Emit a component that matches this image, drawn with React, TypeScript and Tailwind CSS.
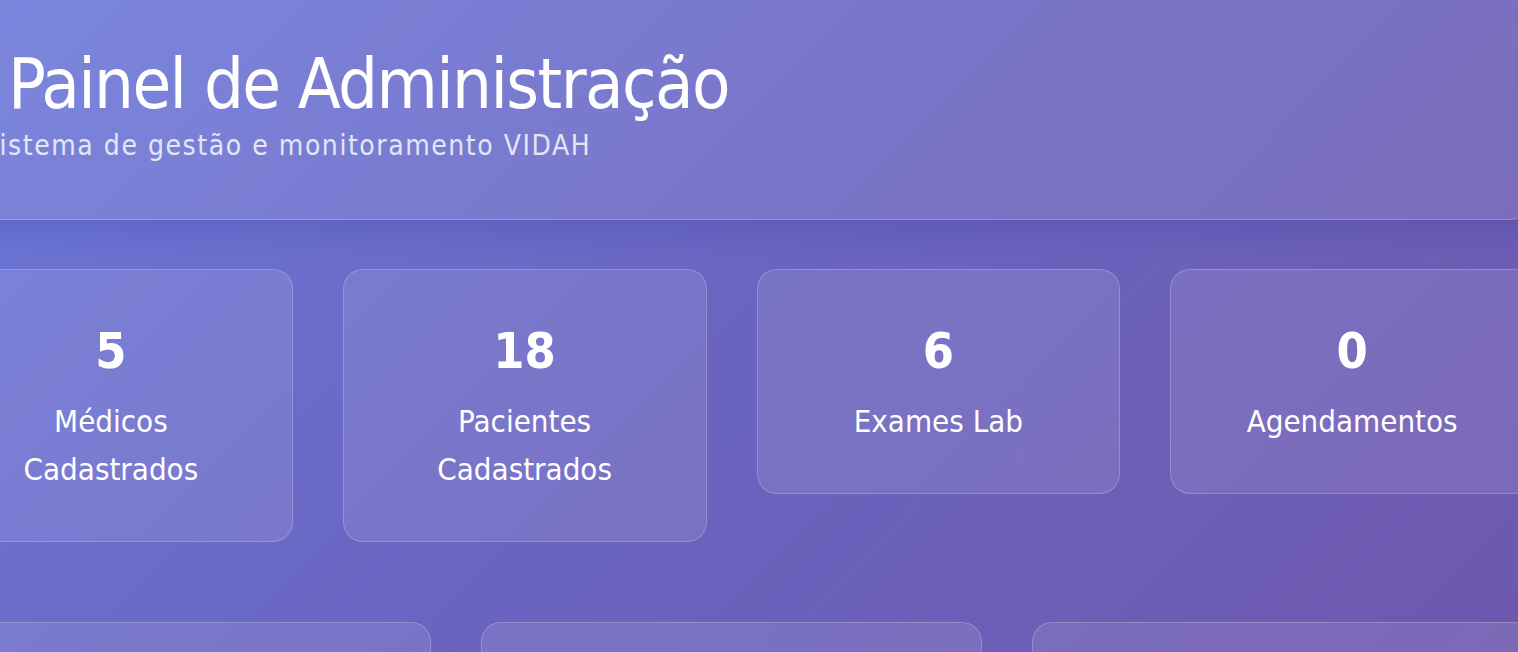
import React from 'react';

const font = { fontFamily: '"DejaVu Sans Condensed", "DejaVu Sans", sans-serif' };

interface Stat {
  value: string;
  label: string[];
}

const stats: Stat[] = [
  { value: '5', label: ['Médicos', 'Cadastrados'] },
  { value: '18', label: ['Pacientes', 'Cadastrados'] },
  { value: '6', label: ['Exames Lab'] },
  { value: '0', label: ['Agendamentos'] },
];

const StatCard: React.FC<{ stat: Stat }> = ({ stat }) => (
  <div className="rounded-[20px] border border-white/20 bg-white/10 pt-[51px] pb-[48px] text-center text-white">
    <div className="text-[50px] leading-[60px] font-bold mb-[16px]">{stat.value}</div>
    <div className="text-[31px] leading-[48px]">
      {stat.label.map((l) => (
        <div key={l}>{l}</div>
      ))}
    </div>
  </div>
);

export default function App() {
  return (
    <div
      className="h-[652px] w-full overflow-hidden bg-[linear-gradient(135deg,#6b78d9_0%,#6a64c0_50%,#6e58ae_100%)]"
      style={font}
    >
      <div className="ml-[-71px] mt-[-12px] w-[1605px]">
        {/* Header */}
        <div className="rounded-[24px] border border-white/20 bg-white/10 pl-[52px] pt-[52px] pb-[55px] text-white shadow-[0_8px_32px_rgba(31,38,135,0.18)]">
          <h1 className="pl-[26px] text-[70px] leading-[86px] font-normal tracking-[-1.6px]">
            Painel de Administração
          </h1>
          <p className="mt-[1px] text-[28px] leading-[36px] tracking-[1.55px] text-white/80">
            Sistema de gestão e monitoramento VIDAH
          </p>
        </div>

        {/* Stats */}
        <div className="mt-[49px] grid grid-cols-4 items-start gap-[50px]">
          {stats.map((s) => (
            <StatCard key={s.value} stat={s} />
          ))}
        </div>

        {/* Sections */}
        <div className="mt-[80px] grid grid-cols-3 gap-[50px]">
          <div className="h-[300px] rounded-[20px] border border-white/20 bg-white/10" />
          <div className="h-[300px] rounded-[20px] border border-white/20 bg-white/10" />
          <div className="h-[300px] rounded-[20px] border border-white/20 bg-white/10" />
        </div>
      </div>
    </div>
  );
}
